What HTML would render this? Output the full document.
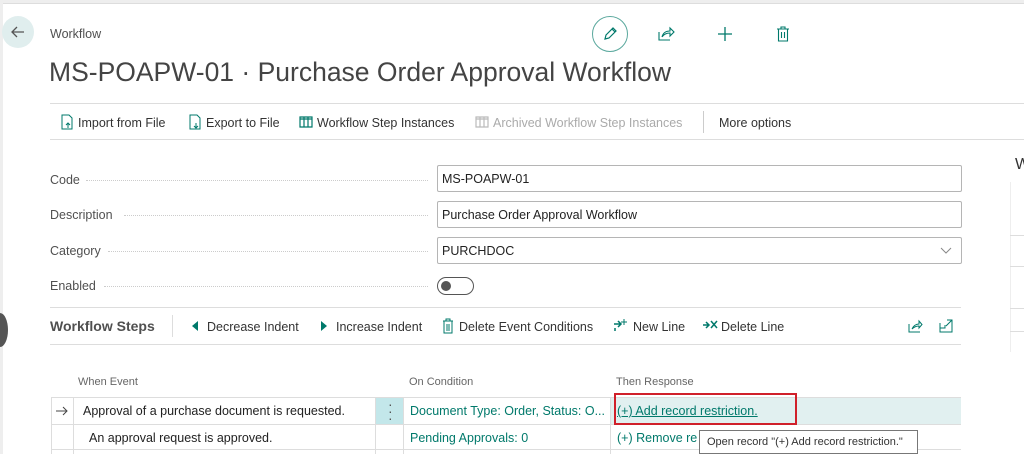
<!DOCTYPE html>
<html><head><meta charset="utf-8"><style>
*{margin:0;padding:0;box-sizing:border-box}
body{width:1024px;height:454px;overflow:hidden;background:#fff;font-family:"Liberation Sans",sans-serif;position:relative;color:#333}
.a{position:absolute;white-space:nowrap}
.t{color:#00796b}
.lbl{font-size:12.5px;color:#505050}
.dots{position:absolute;border-bottom:1.5px dotted #ccc;height:1px}
.inp{position:absolute;border:1px solid #b5b5b5;border-radius:2px;font-size:12.5px;padding:6px 4px;color:#222}
.act{font-size:12.5px;color:#333}
.hl{position:absolute;height:1px;background:#ddd}
</style></head><body>
<div class="a" style="left:0;top:0;width:1024px;height:4px;background:#eee;border-bottom:1px solid #ddd"></div>
<div class="a" style="left:0;top:0;width:3px;height:454px;background:#eee"></div>
<div class="a" style="left:-8px;top:313px;width:16px;height:34px;border-radius:50%;background:#555"></div>
<!-- back -->
<div class="a" style="left:2px;top:16px;width:32px;height:32px;border-radius:50%;background:#e0eeee"></div>
<svg class="a" style="left:10px;top:24px" width="16" height="16"><path d="M14 8H2M7 3L2 8l5 5" stroke="#555" stroke-width="1.3" fill="none"/></svg>
<div class="a lbl" style="left:50px;top:27px;font-size:12.5px">Workflow</div>
<div class="a" style="left:49px;top:57px;font-size:26.5px;color:#444">MS-POAPW-01 · Purchase Order Approval Workflow</div>
<!-- top icons -->
<div class="a" style="left:592px;top:16px;width:36px;height:36px;border-radius:50%;border:1.3px solid #5aa89d"></div>
<svg class="a" style="left:601px;top:25px" width="18" height="18"><path d="M4 14l1-4 7-7 3 3-7 7z M11 4l3 3" stroke="#00796b" stroke-width="1.2" fill="none"/></svg>
<svg class="a" style="left:657px;top:25px" width="18" height="18"><path d="M2 7v8h11M5 12c1-4 4-6 8-6V3l4 4-4 4V8c-3 0-6 1-8 4" stroke="#00796b" stroke-width="1.1" fill="none"/></svg>
<svg class="a" style="left:716px;top:25px" width="18" height="18"><path d="M9 2v14M2 9h14" stroke="#00796b" stroke-width="1.3"/></svg>
<svg class="a" style="left:774px;top:25px" width="18" height="18"><path d="M3 4h12M7 4V2h4v2M4.5 4v12h9V4M7.5 7v6M10.5 7v6" stroke="#00796b" stroke-width="1.1" fill="none"/></svg>
<!-- action bar -->
<div class="hl" style="left:50px;top:103px;width:974px"></div>
<div class="hl" style="left:50px;top:139px;width:974px"></div>
<svg class="a" style="left:60px;top:114px" width="14" height="16"><path d="M2 1h7l3 3v11H2z" stroke="#00796b" fill="none"/><path d="M8 14V9m-2 2l2-2 2 2" stroke="#00796b" fill="none"/></svg>
<div class="a act" style="left:78px;top:116px">Import from File</div>
<svg class="a" style="left:188px;top:114px" width="14" height="16"><path d="M2 1h7l3 3v11H2z" stroke="#00796b" fill="none"/><path d="M8 9v5m-2-2l2 2 2-2" stroke="#00796b" fill="none"/></svg>
<div class="a act" style="left:206px;top:116px">Export to File</div>
<svg class="a" style="left:299px;top:116px" width="14" height="12"><path d="M1 1h12v10H1zM5 1v10M9 1v10M1 3h12" stroke="#00796b" stroke-width="1.2" fill="none"/></svg>
<div class="a act" style="left:317px;top:116px">Workflow Step Instances</div>
<svg class="a" style="left:475px;top:116px" width="14" height="12"><path d="M1 1h12v10H1zM5 1v10M9 1v10M1 3h12" stroke="#bbb" stroke-width="1.2" fill="none"/></svg>
<div class="a act" style="left:493px;top:116px;color:#aaa">Archived Workflow Step Instances</div>
<div class="a" style="left:703px;top:111px;width:1px;height:22px;background:#ccc"></div>
<div class="a act" style="left:719px;top:116px">More options</div>
<!-- fields -->
<div class="a lbl" style="left:50px;top:173px">Code</div><div class="dots" style="left:86px;top:180px;width:342px"></div>
<div class="a lbl" style="left:50px;top:208px">Description</div><div class="dots" style="left:124px;top:215px;width:304px"></div>
<div class="a lbl" style="left:50px;top:244px">Category</div><div class="dots" style="left:108px;top:251px;width:320px"></div>
<div class="a lbl" style="left:50px;top:279px">Enabled</div><div class="dots" style="left:104px;top:286px;width:324px"></div>
<div class="inp" style="left:437px;top:165px;width:525px;height:27px">MS-POAPW-01</div>
<div class="inp" style="left:437px;top:201px;width:525px;height:27px">Purchase Order Approval Workflow</div>
<div class="inp" style="left:437px;top:237px;width:525px;height:27px">PURCHDOC</div>
<svg class="a" style="left:940px;top:245px" width="12" height="10"><path d="M1 3l5 5 5-5" stroke="#888" fill="none"/></svg>
<div class="a" style="left:437px;top:277px;width:37px;height:18px;border:1.3px solid #555;border-radius:9px"></div>
<div class="a" style="left:441px;top:281px;width:10px;height:10px;border-radius:50%;background:#555"></div>
<!-- right panel -->
<div class="a" style="left:1015px;top:156px;font-size:16px;color:#333">W</div>
<div class="a" style="left:1010px;top:182px;width:14px;height:170px;border-left:1px solid #eee;background:#fff"></div>
<div class="hl" style="left:1010px;top:235px;width:14px"></div>
<div class="hl" style="left:1010px;top:266px;width:14px"></div>
<div class="hl" style="left:1010px;top:308px;width:14px"></div>
<div class="hl" style="left:1010px;top:331px;width:14px"></div>
<!-- workflow steps bar -->
<div class="hl" style="left:50px;top:307px;width:911px"></div>
<div class="hl" style="left:50px;top:344px;width:911px"></div>
<div class="a" style="left:50px;top:318px;font-size:14px;font-weight:bold;color:#505050">Workflow Steps</div>
<div class="a" style="left:172px;top:315px;width:1px;height:22px;background:#ddd"></div>
<svg class="a" style="left:191px;top:320px" width="8" height="12"><path d="M7 1v10L1 6z" fill="#00796b"/></svg>
<div class="a act" style="left:207px;top:320px">Decrease Indent</div>
<svg class="a" style="left:320px;top:320px" width="8" height="12"><path d="M1 1v10l6-5z" fill="#00796b"/></svg>
<div class="a act" style="left:336px;top:320px">Increase Indent</div>
<svg class="a" style="left:442px;top:318px" width="12" height="16"><path d="M1 3h10M4 3V1h4v2M2 3v12h8V3M5 6v7M7 6v7" stroke="#00796b" fill="none"/></svg>
<div class="a act" style="left:459px;top:320px">Delete Event Conditions</div>
<svg class="a" style="left:613px;top:318px" width="16" height="14"><path d="M1 6h7M5 3l3 3-3 3M2 3v0M2 10v3" stroke="#00796b" stroke-width="1.5" fill="none"/><path d="M11 1v6M8 4h6" stroke="#00796b"/></svg>
<div class="a act" style="left:633px;top:320px">New Line</div>
<svg class="a" style="left:702px;top:318px" width="16" height="14"><path d="M1 7h6M4 4l3 3-3 3M9 3l6 7M15 3l-6 7" stroke="#00796b" stroke-width="1.5" fill="none"/></svg>
<div class="a act" style="left:721px;top:320px">Delete Line</div>
<svg class="a" style="left:907px;top:318px" width="16" height="16"><path d="M2 6v8h11M5 11c1-3 4-5 7-5V3l3 3.5-3 3.5V8c-3 0-5 1-7 3" stroke="#00796b" fill="none"/></svg>
<svg class="a" style="left:939px;top:319px" width="14" height="14"><path d="M1 4v9h12V1H8M1 9h5V6" stroke="#00796b" fill="none"/><path d="M7 7l6-6M9 1h4v4" stroke="#00796b" fill="none"/></svg>
<!-- grid -->
<div class="a" style="left:78px;top:376px;font-size:11px;color:#666">When Event</div>
<div class="a" style="left:409px;top:376px;font-size:11px;color:#666">On Condition</div>
<div class="a" style="left:616px;top:376px;font-size:11px;color:#666">Then Response</div>
<div class="a" style="left:51px;top:397px;width:910px;height:57px;border-top:1px solid #ddd"></div>
<div class="a" style="left:375px;top:398px;width:28px;height:26px;background:#c3e7ea"></div>
<div class="a" style="left:610px;top:398px;width:351px;height:26px;background:#e1f0f0"></div>
<div class="hl" style="left:51px;top:424px;width:910px"></div>
<div class="hl" style="left:51px;top:449px;width:910px"></div>
<div class="a" style="left:51px;top:397px;width:1px;height:57px;background:#ddd"></div>
<div class="a" style="left:73px;top:397px;width:1px;height:57px;background:#ddd"></div>
<div class="a" style="left:375px;top:397px;width:1px;height:57px;background:#ddd"></div>
<div class="a" style="left:403px;top:397px;width:1px;height:57px;background:#ddd"></div>
<div class="a" style="left:610px;top:397px;width:1px;height:57px;background:#ddd"></div>
<svg class="a" style="left:55px;top:405px" width="14" height="12"><path d="M1 6h11M8 2l4 4-4 4" stroke="#444" fill="none"/></svg>
<div class="a" style="left:83px;top:404px;font-size:12.5px;color:#222">Approval of a purchase document is requested.</div>
<div class="a" style="left:388px;top:401px;font-size:14px;color:#555;line-height:7px">·<br>·<br>·</div>
<div class="a t" style="left:410px;top:404px;font-size:12.5px">Document Type: Order, Status: O...</div>
<div class="a t" style="left:617px;top:404px;font-size:12.5px;text-decoration:underline">(+) Add record restriction.</div>
<div class="a" style="left:89px;top:431px;font-size:12.5px;color:#222">An approval request is approved.</div>
<div class="a t" style="left:410px;top:431px;font-size:12.5px">Pending Approvals: 0</div>
<div class="a t" style="left:617px;top:431px;font-size:12.5px">(+) Remove re</div>
<div class="a" style="left:614px;top:393px;width:183px;height:32px;border:2px solid #d0202a"></div>
<div class="a" style="left:699px;top:430px;width:219px;height:24px;background:#fff;border:1px solid #777;font-size:11px;color:#333;padding:5px 7px">Open record "(+) Add record restriction."</div>
</body></html>
